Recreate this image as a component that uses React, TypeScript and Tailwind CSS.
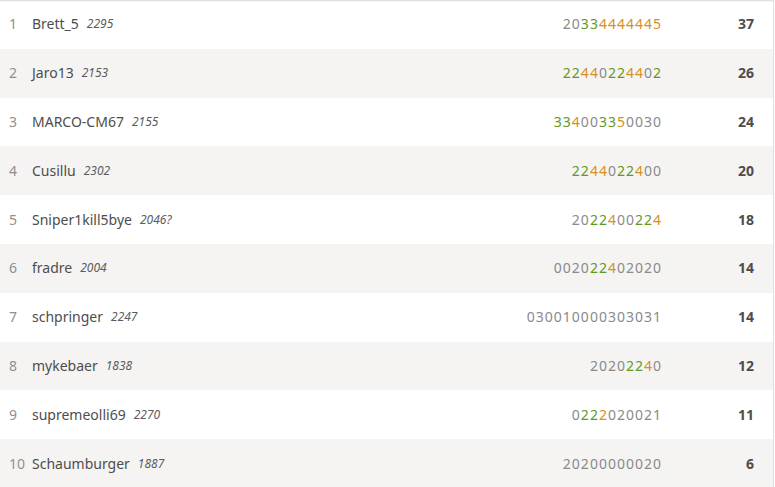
import React from 'react';

type Player = {
    rank: number;
    name: string;
    rating: string;
    // each digit tagged: n = normal, s = streak (green), d = double (orange)
    sheet: string;
    marks: string;
    total: number;
};

const players: Player[] = [
    { rank: 1, name: 'Brett_5', rating: '2295', sheet: '20334444445', marks: 'nnssddddddd', total: 37 },
    { rank: 2, name: 'Jaro13', rating: '2153', sheet: '22440224402', marks: 'ssddnssddns', total: 26 },
    { rank: 3, name: 'MARCO-CM67', rating: '2155', sheet: '334003350030', marks: 'ssdnnssdnnnn', total: 24 },
    { rank: 4, name: 'Cusillu', rating: '2302', sheet: '2244022400', marks: 'ssddnssdnn', total: 20 },
    { rank: 5, name: 'Sniper1kill5bye', rating: '2046?', sheet: '2022400224', marks: 'nnssdnnssd', total: 18 },
    { rank: 6, name: 'fradre', rating: '2004', sheet: '002022402020', marks: 'nnnnssdnnnnn', total: 14 },
    { rank: 7, name: 'schpringer', rating: '2247', sheet: '030010000303031', marks: 'nnnnnnnnnnnnnnn', total: 14 },
    { rank: 8, name: 'mykebaer', rating: '1838', sheet: '20202240', marks: 'nnnnssdn', total: 12 },
    { rank: 9, name: 'supremeolli69', rating: '2270', sheet: '0222020021', marks: 'nssdnnnnnn', total: 11 },
    { rank: 10, name: 'Schaumburger', rating: '1887', sheet: '20200000020', marks: 'nnnnnnnnnnn', total: 6 },
];

const markClass: Record<string, string> = {
    n: 'text-[#8a8a8a]',
    s: 'text-[#629924]',
    d: 'text-[#d59120]',
};

const App: React.FC = () => {
    return (
        <div className="w-[775px] h-[487px] overflow-hidden bg-white pr-px font-['Noto_Sans',sans-serif]">
            <div className="relative h-full border-r border-[#dedede]">
                {/* top shadow */}
                <div className="absolute left-0 right-0 top-0 h-[2px] bg-gradient-to-b from-[#d6d6d6] to-transparent"></div>
                {players.map((p, i) => (
                    <div
                        key={p.rank}
                        className={`flex items-center h-[48.8px] pb-px ${i % 2 === 1 ? 'bg-[#f5f4f2]' : 'bg-white'}`}
                    >
                        <span className="w-[32px] shrink-0 pl-[9px] text-[14px] text-[#8f8f8f]">{p.rank}</span>
                        <span className="text-[14px] text-[#4d4d4d]">{p.name}</span>
                        <em className="ml-[8px] pt-px text-[12px] text-[#5c5c5c]">{p.rating}</em>
                        <div className="flex-1"></div>
                        <span className="text-[14px] tracking-[1px]">
                            {p.sheet.split('').map((d, j) => (
                                <span key={j} className={markClass[p.marks[j]]}>{d}</span>
                            ))}
                        </span>
                        <span className="w-[111px] shrink-0 pr-[19px] text-right text-[14px] font-bold text-[#4d4d4d]">{p.total}</span>
                    </div>
                ))}
            </div>
        </div>
    );
};

export default App;
